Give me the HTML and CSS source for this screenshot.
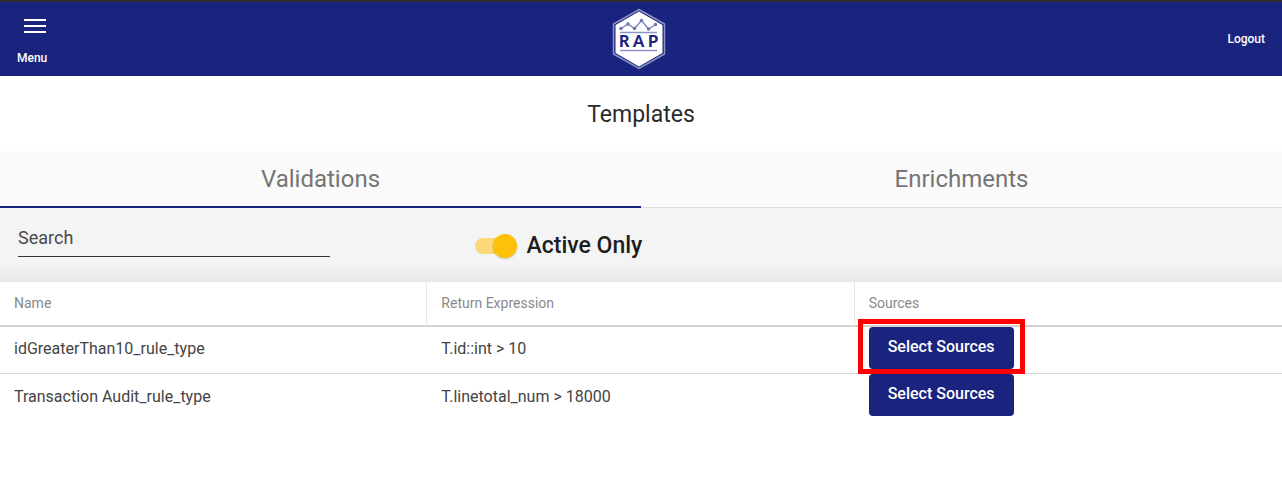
FILE: index.html
```html
<!DOCTYPE html>
<html lang="en">
<head>
<meta charset="utf-8">
<meta name="viewport" content="width=device-width, initial-scale=1">
<title>Templates</title>
<link rel="stylesheet" href="styles.css">
</head>
<body>
<header class="topbar">
  <button class="menu" type="button">
    <svg class="menu-icon" width="24" height="16" viewBox="0 0 24 16" aria-hidden="true"><path d="M1 2h22M1 8h22M1 14h22" stroke="#fff" stroke-width="2"/></svg>
    <span>Menu</span>
  </button>
  <svg class="logo" width="54" height="62" viewBox="0 0 54 62" role="img" aria-label="RAP">
    <path d="M27 1.500 52.500 16v30L27 60.500 1.500 46V16z" fill="#1a237e" stroke="#8e94c4" stroke-width="1.500"/>
    <path d="M27 3.500 50.500 17v28L27 58.500 3.500 45V17z" fill="#fff"/>
    <path d="M9 20.500 16 16 22.500 20.500 29.500 12.500 36.500 21 43.500 16.500" fill="none" stroke="#7d84bb" stroke-width="1.400"/>
    <g fill="#6b73b0"><circle cx="9" cy="20.500" r="1.700"/><circle cx="16" cy="16" r="1.700"/><circle cx="22.500" cy="20.500" r="1.700"/><circle cx="29.500" cy="12.500" r="1.700"/><circle cx="36.500" cy="21" r="1.700"/><circle cx="43.500" cy="16.500" r="1.700"/></g>
    <path d="M8 24.500h37M8 42.500h37" stroke="#8e94c4" stroke-width="1.500"/>
    <text class="logo-text" x="7 21 36" y="39">RAP</text>
  </svg>
  <a class="logout" href="#">Logout</a>
</header>
<main>
  <h1 class="title">Templates</h1>
  <div class="tabs" role="tablist">
    <button class="tab tab-active" type="button" role="tab" aria-selected="true">Validations</button>
    <button class="tab" type="button" role="tab" aria-selected="false">Enrichments</button>
  </div>
  <div class="filters">
    <input class="search" type="text" placeholder="Search" aria-label="Search">
    <label class="toggle">
      <input class="switch" type="checkbox" role="switch" checked>
      <span>Active Only</span>
    </label>
  </div>
  <table class="rules">
    <thead>
      <tr><th scope="col">Name</th><th scope="col">Return Expression</th><th scope="col">Sources</th></tr>
    </thead>
    <tbody>
      <tr>
        <td>idGreaterThan10_rule_type</td>
        <td>T.id::int &gt; 10</td>
        <td class="action"><div class="slot"><button class="select" type="button">Select Sources</button><span class="highlight"></span></div></td>
      </tr>
      <tr>
        <td>Transaction Audit_rule_type</td>
        <td>T.linetotal_num &gt; 18000</td>
        <td class="action"><div class="slot"><button class="select" type="button">Select Sources</button></div></td>
      </tr>
    </tbody>
  </table>
</main>
</body>
</html>
```
FILE: styles.css
```css
* { box-sizing: border-box; }
body {
  margin: 0;
  background: #fff;
  color: #2b2b2b;
  font-family: Roboto, "Liberation Sans", sans-serif;
}
button, input { font-family: inherit; }
button { border: 0; cursor: pointer; }

.topbar {
  display: grid;
  grid-template-columns: 1fr auto 1fr;
  align-items: center;
  height: 76px;
  padding: 0 17px;
  border-top: 2px solid #2e2e30;
  background: #1a237e;
}
.menu {
  display: flex;
  flex-direction: column;
  align-items: flex-end;
  justify-self: start;
  gap: 16px;
  padding: 6px 0 0;
  background: none;
  color: #fff;
  font-size: 12px;
  font-weight: 500;
  line-height: 16px;
}
.logo {
  display: block;
  margin-right: 5px;
}
.logo-text {
  fill: #1a237e;
  font-family: Lato, sans-serif;
  font-size: 16px;
  font-weight: 900;
}
.logout {
  justify-self: end;
  color: #fff;
  font-size: 12px;
  font-weight: 500;
  line-height: 16px;
  text-decoration: none;
}

.title {
  margin: 0;
  padding: 23px 0 20px;
  font-size: 23px;
  font-weight: 400;
  line-height: 32px;
  text-align: center;
}

.tabs {
  display: grid;
  grid-template-columns: 1fr 1fr;
  background: #fafafa;
}
.tab {
  height: 57px;
  padding: 0 0 1px;
  border-bottom: 1px solid #dcdcdc;
  background: none;
  color: #757575;
  font-size: 24px;
  line-height: 32px;
}
.tab-active {
  padding: 0;
  border-bottom: 2px solid #1a237e;
}

.filters {
  display: flex;
  align-items: flex-start;
  gap: 145px;
  height: 74px;
  padding: 12px 18px 0;
  background: linear-gradient(#f4f4f4 75%, #e8e8e8);
}
.search {
  width: 25%;
  height: 37px;
  padding: 0 0 2px;
  border: 0;
  border-bottom: 1px solid #333;
  border-radius: 0;
  outline: 0;
  background: none;
  color: #333;
  font-size: 18px;
}
.search::placeholder { color: #4a4a4a; opacity: 1; }
.toggle {
  display: flex;
  align-items: center;
  gap: 10px;
  padding-top: 9px;
  color: #1d1d1d;
  font-size: 23px;
  font-weight: 500;
  line-height: 34px;
}
.switch {
  appearance: none;
  display: flex;
  align-items: center;
  justify-content: flex-end;
  width: 42px;
  height: 24px;
  margin: 0;
  background: none;
  position: relative;
}
.switch::after {
  content: "";
  position: absolute;
  inset: 4px 6px 4px 0;
  border-radius: 8px;
  background: #fbd978;
}
.switch::before {
  content: "";
  z-index: 1;
  width: 24px;
  height: 24px;
  border-radius: 50%;
  background: #ffc107;
  box-shadow: 0 1px 2px #0003;
}

.rules {
  width: 100%;
  border-collapse: separate;
  border-spacing: 0;
  table-layout: fixed;
}
.rules th {
  height: 45px;
  padding: 0 14px 1px;
  border-right: 1px solid #e6e6e6;
  border-bottom: 2px solid #d2d2d2;
  color: #8a8a8a;
  font-size: 14px;
  font-weight: 400;
  text-align: left;
}
.rules th:last-child { border-right: 0; }
.rules td {
  height: 47px;
  padding: 0 14px 3px;
  border-bottom: 1px solid #d8d8d8;
  color: #444;
  font-size: 16px;
}
.rules tr:last-child td { border-bottom: 0; }
.rules .action {
  padding-bottom: 0;
  vertical-align: top;
}
.slot {
  position: relative;
  width: fit-content;
}
.select {
  display: block;
  height: 42px;
  padding: 0 19px 3px;
  border-radius: 4px;
  background: #1a237e;
  color: #fff;
  font-size: 16px;
  font-weight: 500;
}
.highlight {
  position: absolute;
  inset: -8px -11px -5px;
  border: 5px solid #f00;
  pointer-events: none;
}
```
